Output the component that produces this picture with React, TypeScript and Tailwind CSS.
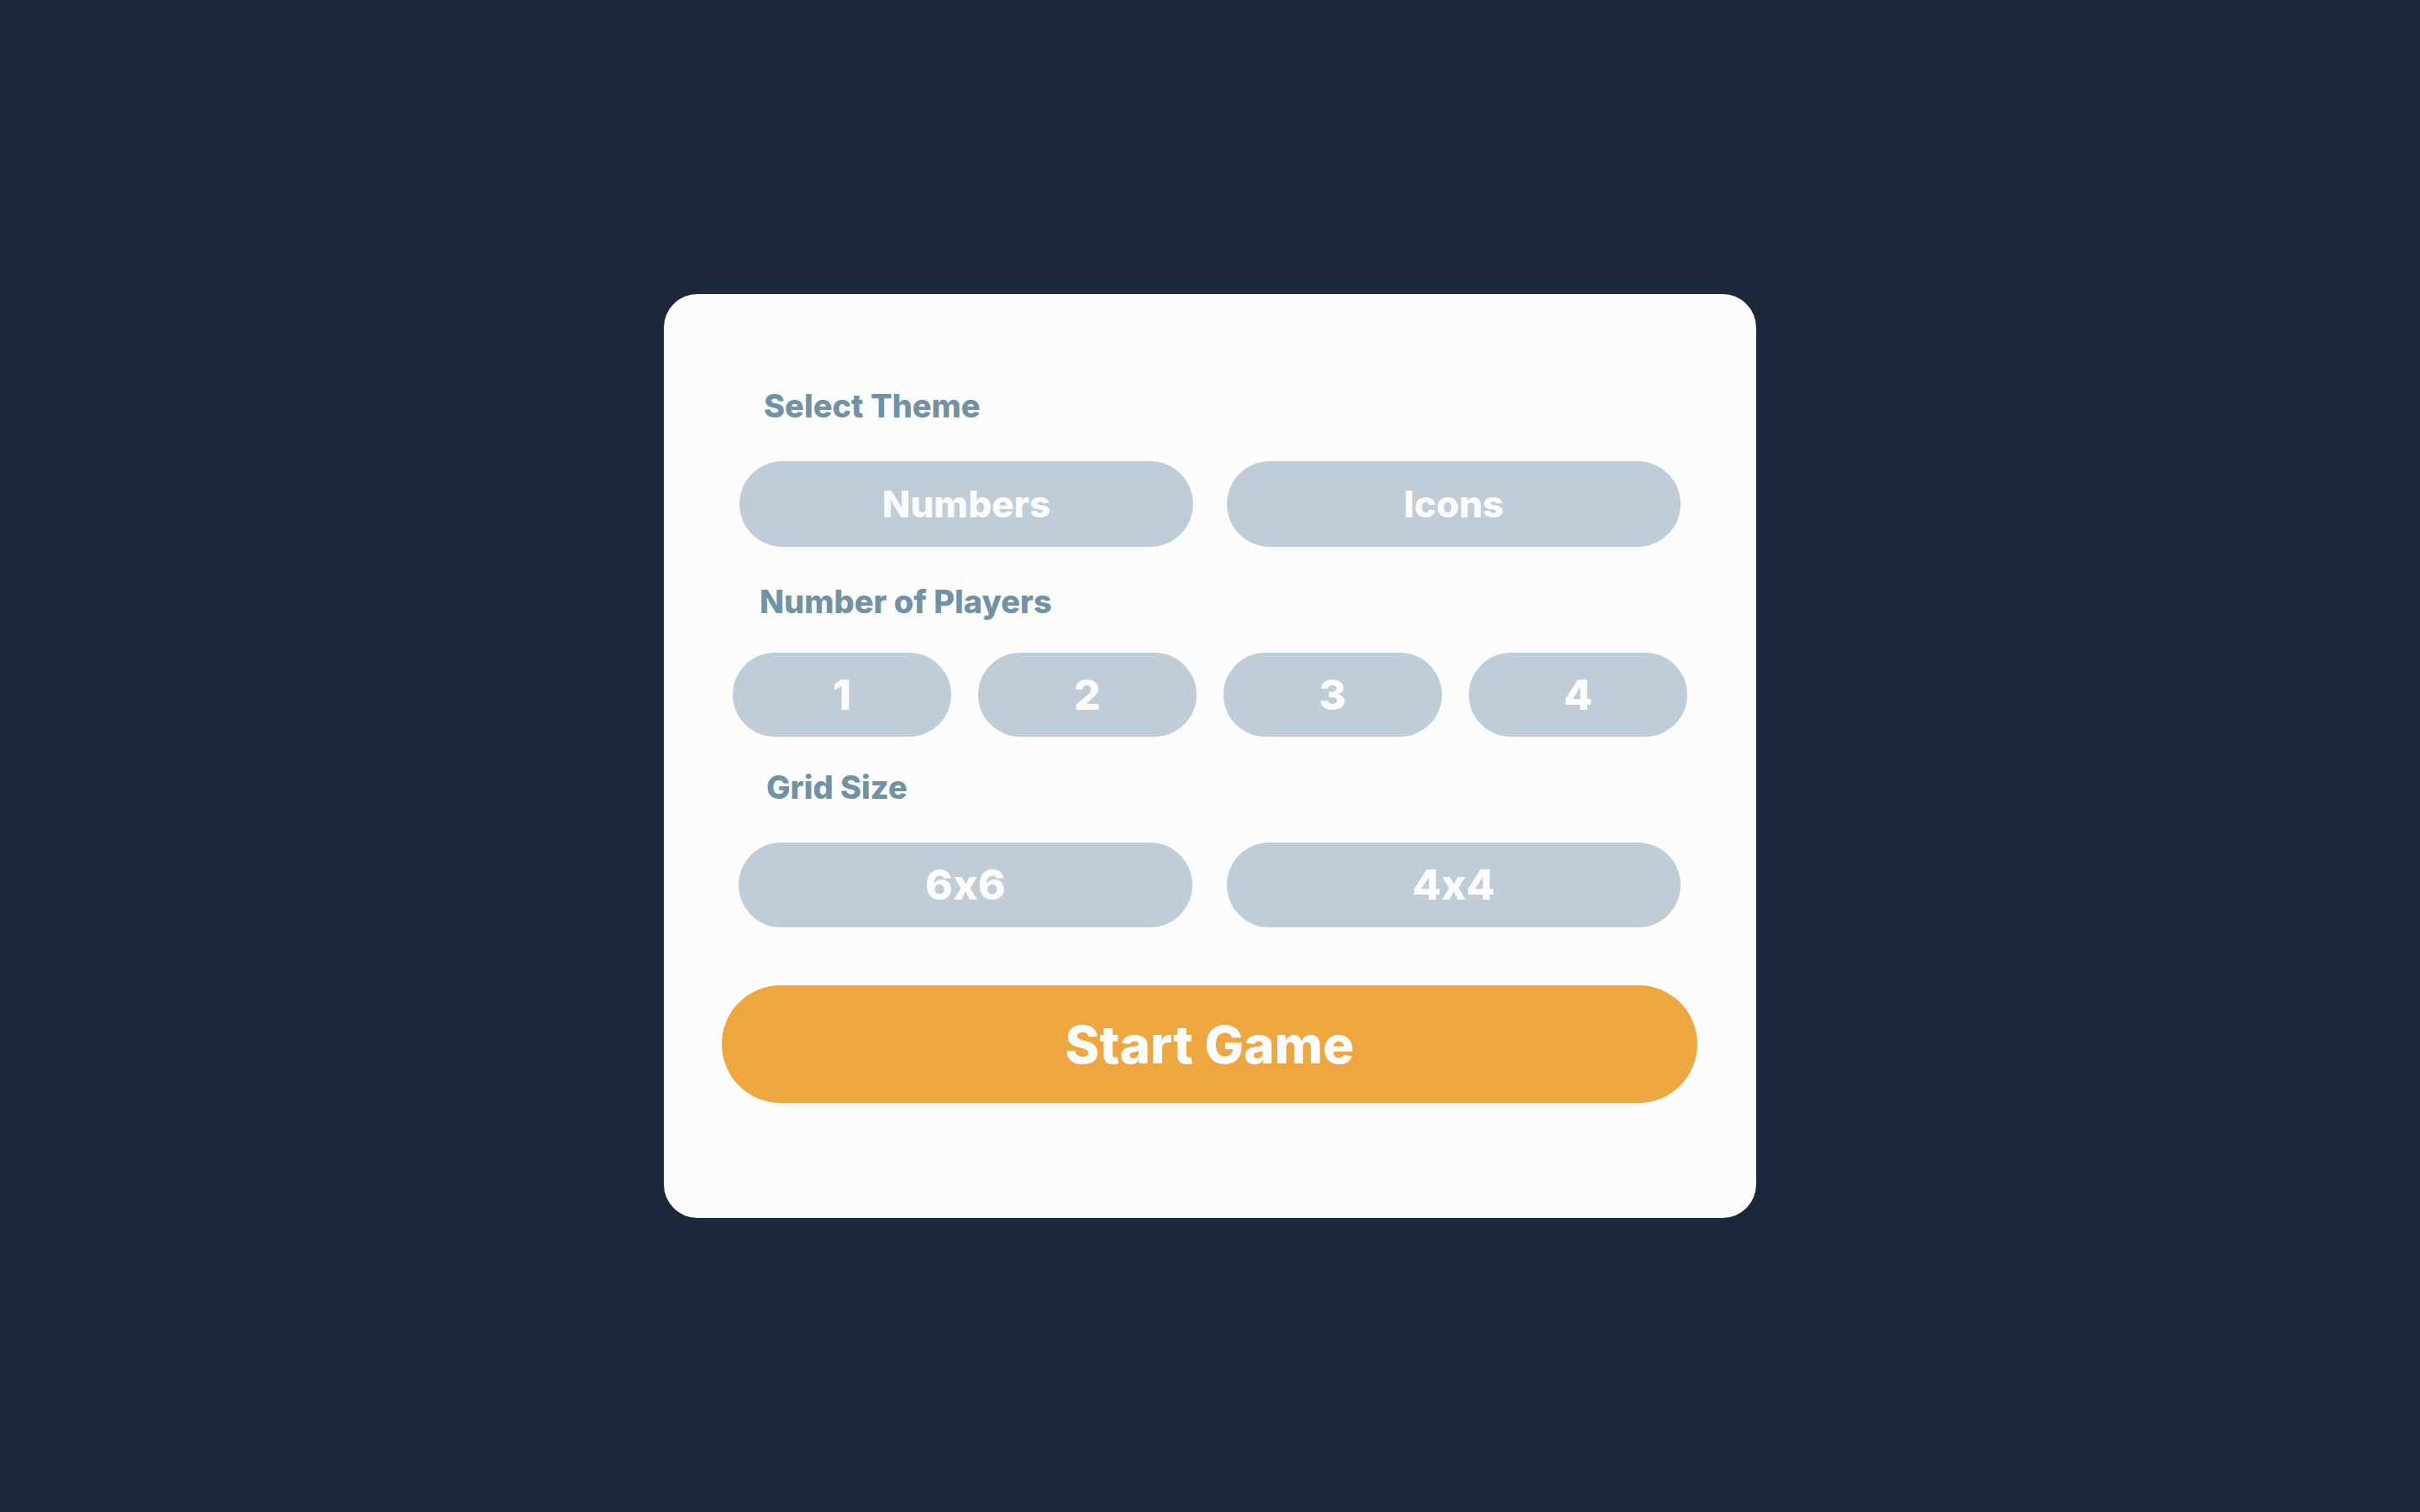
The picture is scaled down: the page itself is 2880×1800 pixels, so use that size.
import React from "react";

const font = { fontFamily: 'Inter, "Noto Sans", Arial, sans-serif' };

function Pill({ label, className }: { label: string; className: string }) {
  return (
    <button
      className={`flex items-center justify-center rounded-full bg-[#bfcdd8] font-extrabold text-[#fcfcfc] [font-feature-settings:'calt'_0] ${className}`}
      style={font}
    >
      {label}
    </button>
  );
}

function Label({ text, className }: { text: string; className: string }) {
  return (
    <div
      className={`h-[44px] text-[38px] font-extrabold leading-[44px] text-[#7191a5] ${className}`}
      style={font}
    >
      {text}
    </div>
  );
}

export default function App() {
  return (
    <div className="flex h-[1800px] w-[2880px] items-center justify-center bg-[#1b2839]" style={font}>
      <div className="flex h-[1100px] w-[1300px] flex-col rounded-[40px] bg-[#fcfcfc] pt-[111px]">
        <Label text="Select Theme" className="ml-[119px]" />
        <div className="mt-[44px] ml-[90px] flex w-[1120px] gap-[40px]">
          <Pill label="Numbers" className="h-[102px] w-[540px] text-[44px]" />
          <Pill label="Icons" className="h-[102px] w-[540px] text-[44px]" />
        </div>

        <Label text="Number of Players" className="mt-[43px] ml-[114px]" />
        <div className="mt-[39px] ml-[82px] flex w-[1136px] gap-[32px]">
          <Pill label="1" className="h-[100px] w-[260px] text-[50px]" />
          <Pill label="2" className="h-[100px] w-[260px] text-[50px]" />
          <Pill label="3" className="h-[100px] w-[260px] text-[50px]" />
          <Pill label="4" className="h-[100px] w-[260px] text-[50px]" />
        </div>

        <Label text="Grid Size" className="mt-[38px] ml-[122px]" />
        <div className="mt-[44px] ml-[89px] flex w-[1121px] gap-[41px]">
          <Pill label="6x6" className="h-[101px] w-[540px] text-[50px]" />
          <Pill label="4x4" className="h-[101px] w-[540px] text-[50px]" />
        </div>

        <button
          className="mt-[69px] ml-[69px] flex h-[140px] w-[1161px] items-center justify-center rounded-full bg-[#eea640] text-[62px] font-extrabold text-[#fcfcfc]"
          style={font}
        >
          Start Game
        </button>
      </div>
    </div>
  );
}
